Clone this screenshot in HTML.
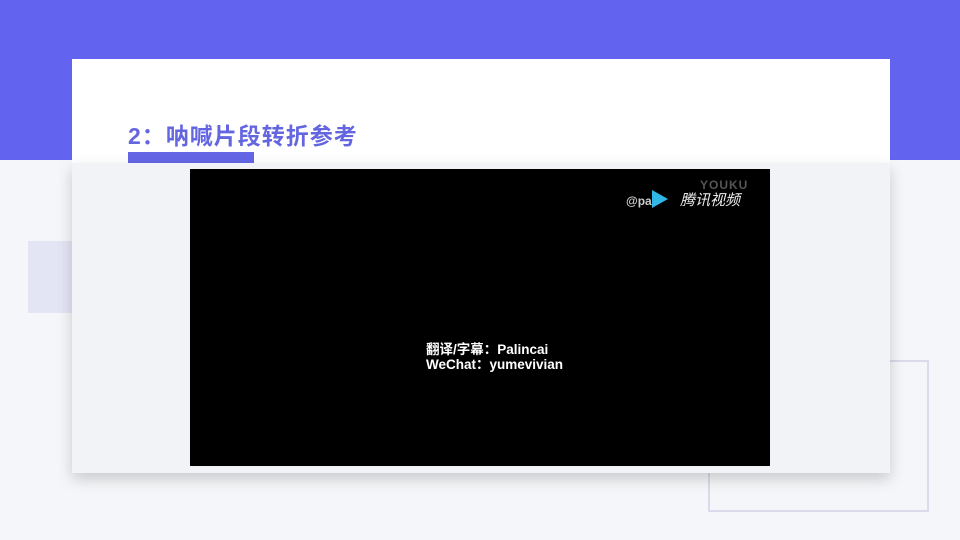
<!DOCTYPE html>
<html><head><meta charset="utf-8"><style>
body{margin:0;width:960px;height:540px;position:relative;overflow:hidden;background:#f5f6f9;font-family:"Liberation Sans","Noto Sans CJK SC",sans-serif}
div{position:absolute}
</style></head><body>
<div style="left:0;top:0;width:960px;height:160px;background:#6264ef"></div>
<div style="left:28px;top:241px;width:44px;height:72px;background:#e3e4f4"></div>
<div style="left:708px;top:360px;width:217px;height:148px;border:2px solid #d9daeb"></div>
<div style="left:72px;top:59px;width:818px;height:110px;background:#fff"></div>
<div style="left:128px;top:117px;font-size:23px;font-weight:bold;color:#6466e0;white-space:nowrap;letter-spacing:1px">2：呐喊片段转折参考</div>
<div style="left:128px;top:152px;width:126px;height:11px;background:#6466e6"></div>
<div style="left:72px;top:163px;width:818px;height:310px;background:#f2f3f6;box-shadow:0 6px 14px rgba(0,0,0,0.18)"></div>
<div style="left:190px;top:169px;width:580px;height:297px;background:#000"></div>
<div style="left:700px;top:178px;font-size:12px;font-weight:bold;color:#555;letter-spacing:1px">YOUKU</div>
<div style="left:626px;top:194px;font-size:12px;font-weight:bold;color:#ccc">@pa</div>
<div style="left:652px;top:190px;width:0;height:0;border-left:16px solid #2fb7e8;border-top:9px solid transparent;border-bottom:9px solid transparent"></div>
<div style="left:680px;top:189px;font-size:15px;color:#eee;font-style:italic">腾讯视频</div>
<div style="left:426px;top:342px;font-size:13.5px;font-weight:bold;color:#fff;line-height:15px">翻译/字幕：Palincai<br>WeChat：yumevivian</div>
</body></html>
